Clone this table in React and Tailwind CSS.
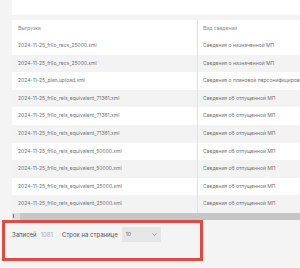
import React from "react";

const rows = [
  ["2024-11-25_frllo_recs_25000.xml", "Сведения о назначенной МП"],
  ["2024-11-25_frllo_recs_25000.xml", "Сведения о назначенной МП"],
  ["2024-11-25_plan.upload.xml", "Сведения о плановой персонифицированной"],
  ["2024-11-25_frllo_rels_equivalent_71361.xml", "Сведения об отпущенной МП"],
  ["2024-11-25_frllo_rels_equivalent_71361.xml", "Сведения об отпущенной МП"],
  ["2024-11-25_frllo_rels_equivalent_71361.xml", "Сведения об отпущенной МП"],
  ["2024-11-25_frllo_rels_equivalent_50000.xml", "Сведения об отпущенной МП"],
  ["2024-11-25_frllo_rels_equivalent_50000.xml", "Сведения об отпущенной МП"],
  ["2024-11-25_frllo_rels_equivalent_25000.xml", "Сведения об отпущенной МП"],
  ["2024-11-25_frllo_rels_equivalent_25000.xml", "Сведения об отпущенной МП"],
];

export default function App() {
  return (
    <div
      className="relative w-[300px] h-[268px] overflow-hidden bg-[#f4f4f4] pl-[12px]"
      style={{ fontFamily: "Inter, 'Noto Sans', sans-serif" }}
    >
      <div className="h-[15px] bg-white" />
      <div className="h-[5px]" />
      <div className="bg-white">
        <div className="flex h-[17px] items-center text-[5px] text-[#8a8a8a]">
          <div className="w-[185px] shrink-0 pl-[6px] whitespace-nowrap">Выгрузка</div>
          <div className="h-full min-w-0 flex-1 border-l border-[#e2e2e2] pl-[5px] flex items-center whitespace-nowrap">
            Вид сведений
          </div>
        </div>
        {rows.map((r, i) => (
          <div
            key={i}
            className={`flex h-[17.6px] items-center text-[5px] text-[#707070] ${
              i % 2 === 1 ? "bg-[#f3f3f3]" : "bg-white"
            }`}
          >
            <div className="w-[185px] shrink-0 pl-[6px] whitespace-nowrap overflow-hidden">{r[0]}</div>
            <div className="h-full min-w-0 flex-1 border-l border-[#e2e2e2] pl-[5px] flex items-center whitespace-nowrap overflow-hidden">
              {r[1]}
            </div>
          </div>
        ))}
      </div>
      <div className="flex h-[7px] bg-[#c6c6c6]">
        <div className="w-[8px] bg-[#dcdcdc] flex items-center justify-start pl-[1px]">
          <div className="w-[1px] h-[4px] bg-[#777]" />
        </div>
      </div>
      <div className="flex items-center h-[30px] text-[6px] text-[#555]">
        <span>Записей</span>
        <span className="ml-[4px] text-[#aaa]">1081</span>
        <span className="ml-[9px]">Строк на странице</span>
        <div className="ml-[4px] flex h-[15px] w-[39px] items-center justify-between rounded-[1px] bg-[#e6e6e6] px-[4px] text-[5px] text-[#666]">
          <span>10</span>
          <svg width="5" height="3" viewBox="0 0 5 3">
            <path d="M0.5 0.5 L2.5 2.5 L4.5 0.5" fill="none" stroke="#888" strokeWidth="0.7" />
          </svg>
        </div>
      </div>
      <div className="absolute left-[2px] top-[220px] w-[201px] h-[41px] border-[3px] border-[#dc4c44]" />
    </div>
  );
}
